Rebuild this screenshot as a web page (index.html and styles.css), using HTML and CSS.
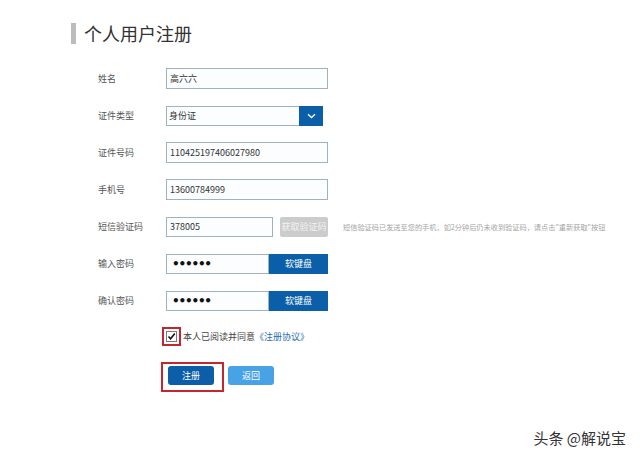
FILE: index.html
```html
<!DOCTYPE html>
<html lang="zh-CN">
<head>
    <meta charset="UTF-8">
    <title>个人用户注册</title>
    <link rel="stylesheet" href="styles.css">
</head>
<body>

<div class="page">
    <h1 class="title">个人用户注册</h1>

    <!-- Registration form -->
    <form class="reg-form">
        <div class="row">
            <label class="label">姓名</label>
            <input class="text" type="text" value="高六六">
        </div>

        <div class="row">
            <label class="label">证件类型</label>
            <div class="select">
                <span class="select-value">身份证</span>
                <span class="select-btn">
                    <svg width="9" height="6" viewBox="0 0 9 6"><path d="M1 1.2 L4.5 4.5 L8 1.2" fill="none" stroke="#fff" stroke-width="1.4"/></svg>
                </span>
            </div>
        </div>

        <div class="row">
            <label class="label">证件号码</label>
            <input class="text" type="text" value="110425197406027980">
        </div>

        <div class="row">
            <label class="label">手机号</label>
            <input class="text" type="text" value="13600784999">
        </div>

        <div class="row">
            <label class="label">短信验证码</label>
            <input class="text short" type="text" value="378005">
            <button type="button" class="btn-code">获取验证码</button>
            <span class="hint">短信验证码已发送至您的手机，如2分钟后仍未收到验证码，请点击"重新获取"按钮</span>
        </div>

        <div class="row">
            <label class="label">输入密码</label>
            <input class="text pwd" type="password" value="123456">
            <button type="button" class="btn-kb">软键盘</button>
        </div>

        <div class="row">
            <label class="label">确认密码</label>
            <input class="text pwd" type="password" value="123456">
            <button type="button" class="btn-kb">软键盘</button>
        </div>

        <!-- Agreement -->
        <div class="agree">
            <span class="mark mark-check">
                <span class="check">
                    <svg width="9" height="9" viewBox="0 0 9 9"><path d="M1.5 4.5 L3.6 6.8 L7.8 1.6" fill="none" stroke="#111" stroke-width="1.6"/></svg>
                </span>
            </span>
            <span class="agree-text">本人已阅读并同意<a href="#">《注册协议》</a></span>
        </div>

        <div class="actions">
            <span class="mark mark-btn">
                <button type="button" class="btn btn-submit">注册</button>
            </span>
            <button type="button" class="btn btn-back">返回</button>
        </div>
    </form>
</div>

<div class="watermark">头条 @解说宝</div>

</body>
</html>
```

FILE: styles.css
```css
/* Basic Styles */
body {
    margin: 0;
    background-color: #fff;
    font-family: "Noto Sans CJK SC", "Noto Sans", sans-serif;
    color: #333;
}

.page {
    padding: 23px 0 0 71px;
}

.title {
    margin: 0;
    height: 21px;
    line-height: 21px;
    border-left: 5px solid #bcbcbc;
    padding-left: 8px;
    font-size: 18px;
    font-weight: normal;
    color: #333;
}

.reg-form {
    margin-top: 24px;
    padding-left: 27px;
}

.row {
    display: flex;
    align-items: center;
    height: 21px;
    margin-bottom: 16px;
}

.label {
    width: 68px;
    font-size: 9px;
    color: #555;
}

.text {
    box-sizing: border-box;
    width: 162px;
    height: 21px;
    margin: 0;
    padding: 0 3px;
    border: 1px solid #9fb3be;
    background-color: #fbfdfe;
    font-family: "Noto Sans CJK SC", "Noto Sans", sans-serif;
    font-size: 9px;
    color: #333;
    outline: none;
}

.text.short {
    width: 107px;
    height: 20px;
}

.text.pwd {
    width: 103px;
    height: 20px;
    padding-left: 5px;
    font-family: "DejaVu Sans", sans-serif;
    font-size: 12px;
    font-weight: bold;
    color: #111;
    letter-spacing: -1.2px;
}

/* Select box */
.select {
    box-sizing: border-box;
    display: flex;
    width: 157px;
    height: 20px;
    border: 1px solid #9fb3be;
    background-color: #fbfdfe;
}

.select-value {
    flex: 1;
    padding-left: 2px;
    font-size: 9px;
    line-height: 18px;
}

.select-btn {
    width: 24px;
    margin: -1px -1px -1px 0;
    background-color: #0b5fa9;
    display: flex;
    align-items: center;
    justify-content: center;
}

button {
    font-family: "Noto Sans CJK SC", "Noto Sans", sans-serif;
    font-size: 9px;
    color: #fff;
    border: none;
    cursor: pointer;
    padding: 0;
}

.btn-code {
    width: 48px;
    height: 20px;
    margin-left: 7px;
    background-color: #cccccc;
    color: #f2f2f2;
    border-radius: 2px;
}

.hint {
    margin-left: 15px;
    font-size: 7.2px;
    color: #a5a5a5;
    white-space: nowrap;
}

.btn-kb {
    width: 59px;
    height: 20px;
    background-color: #0b5fa9;
}

/* Agreement and actions */
.agree {
    display: flex;
    align-items: center;
    margin-left: 64px;
    height: 19px;
}

.mark {
    display: inline-flex;
    border: 2px solid #c3262f;
}

.mark-check {
    padding: 2px;
}

.check {
    box-sizing: border-box;
    width: 11px;
    height: 11px;
    border: 1px solid #7a7a7a;
    background-color: #fff;
    display: flex;
    align-items: center;
    justify-content: center;
}

.agree-text {
    margin-left: 2px;
    font-size: 9px;
    color: #444;
}

.agree-text a {
    color: #2a6fb5;
    text-decoration: none;
}

.actions {
    display: flex;
    align-items: flex-start;
    margin: 16px 0 0 63px;
}

.mark-btn {
    padding: 2px 8px 5px 5px;
}

.btn {
    width: 46px;
    height: 19px;
    border-radius: 3px;
}

.btn-submit {
    background-color: #0c5ea8;
}

.btn-back {
    margin: 4px 0 0 4px;
    background-color: #48a2e6;
}

/* Watermark overlay */
.watermark {
    position: absolute;
    right: 14px;
    bottom: 13px;
    font-size: 15px;
    color: #333;
    text-shadow: 0 0 2px #fff, 0 0 2px #fff;
}
```
